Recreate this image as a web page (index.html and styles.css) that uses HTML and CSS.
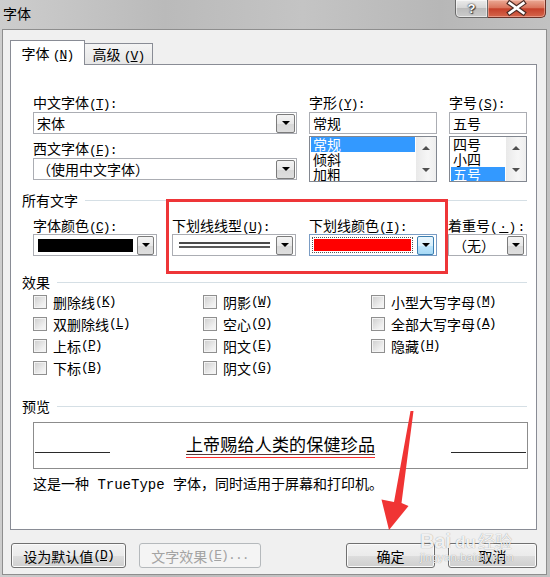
FILE: index.html
```html
<!DOCTYPE html>
<html lang="zh-CN">
<head>
<meta charset="utf-8">
<title>字体</title>
<link rel="stylesheet" href="styles.css">
</head>
<body>
<div class="window">
  <div class="titlebar">
    <span class="title">字体</span>
    <div class="caption">
      <div class="cap-help">?</div>
      <div class="cap-close">
        <svg width="58" height="17" viewBox="0 0 58 17">
          <path d="M22 3 L36 13 M36 3 L22 13" stroke="#4b2b24" stroke-width="5" stroke-linecap="square"/>
          <path d="M22 3 L36 13 M36 3 L22 13" stroke="#ffffff" stroke-width="2.6" stroke-linecap="square"/>
        </svg>
      </div>
    </div>
  </div>

  <div class="client">
    <div class="tabs">
      <div class="tab tab-font">字体 <span class="mn">(<u>N</u>)</span></div>
      <div class="tab tab-adv">高级 <span class="mn">(<u>V</u>)</span></div>
    </div>

    <div class="panel">
      <div class="font-grid">
        <div class="col">
          <div class="lbl">中文字体<span class="mn">(<u>T</u>):</span></div>
          <div class="combo"><span class="combo-text">宋体</span><span class="dd"></span></div>
          <div class="lbl lbl-second">西文字体<span class="mn">(<u>F</u>):</span></div>
          <div class="combo"><span class="combo-text">（使用中文字体）</span><span class="dd"></span></div>
        </div>
        <div class="col">
          <div class="lbl">字形<span class="mn">(<u>Y</u>):</span></div>
          <div class="field">常规</div>
          <div class="listbox">
            <div class="items">
              <div class="item sel">常规</div>
              <div class="item">倾斜</div>
              <div class="item">加粗</div>
            </div>
            <div class="vscroll"><span class="arr-up"></span><span class="arr-down"></span></div>
          </div>
        </div>
        <div class="col">
          <div class="lbl">字号<span class="mn">(<u>S</u>):</span></div>
          <div class="field">五号</div>
          <div class="listbox">
            <div class="items">
              <div class="item">四号</div>
              <div class="item">小四</div>
              <div class="item sel">五号</div>
            </div>
            <div class="vscroll"><span class="arr-up"></span><span class="arr-down"></span></div>
          </div>
        </div>
      </div>

      <div class="group-head head-all">所有文字</div>
      <div class="row2">
        <div class="r2 r2-color">
          <div class="lbl">字体颜色<span class="mn">(<u>C</u>):</span></div>
          <div class="combo combo-sm"><span class="swatch swatch-black"></span><span class="dd dd-sm"></span></div>
        </div>
        <div class="r2 r2-ultype">
          <div class="lbl">下划线线型<span class="mn">(<u>U</u>):</span></div>
          <div class="combo combo-sm"><span class="dbl-line"></span><span class="dd dd-sm"></span></div>
        </div>
        <div class="r2 r2-ulcolor">
          <div class="lbl">下划线颜色<span class="mn">(<u>I</u>):</span></div>
          <div class="combo combo-sm combo-focus"><span class="focus-ring"><span class="swatch swatch-red"></span></span><span class="dd dd-sm dd-hot"></span></div>
        </div>
        <div class="r2 r2-emph">
          <div class="lbl">着重号<span class="mn mn-wide">(<u>·</u>):</span></div>
          <div class="combo combo-sm"><span class="combo-text">（无）</span><span class="dd dd-sm"></span></div>
        </div>
      </div>

      <div class="group-head head-fx">效果</div>
      <div class="effects">
        <div class="chk"><span class="cb"></span>删除线<span class="mn">(<u>K</u>)</span></div>
        <div class="chk"><span class="cb"></span>双删除线<span class="mn">(<u>L</u>)</span></div>
        <div class="chk"><span class="cb"></span>上标<span class="mn">(<u>P</u>)</span></div>
        <div class="chk"><span class="cb"></span>下标<span class="mn">(<u>B</u>)</span></div>
        <div class="chk"><span class="cb"></span>阴影<span class="mn">(<u>W</u>)</span></div>
        <div class="chk"><span class="cb"></span>空心<span class="mn">(<u>O</u>)</span></div>
        <div class="chk"><span class="cb"></span>阳文<span class="mn">(<u>E</u>)</span></div>
        <div class="chk"><span class="cb"></span>阴文<span class="mn">(<u>G</u>)</span></div>
        <div class="chk"><span class="cb"></span>小型大写字母<span class="mn">(<u>M</u>)</span></div>
        <div class="chk"><span class="cb"></span>全部大写字母<span class="mn">(<u>A</u>)</span></div>
        <div class="chk"><span class="cb"></span>隐藏<span class="mn">(<u>H</u>)</span></div>
      </div>

      <div class="group-head head-pv">预览</div>
      <div class="preview">
        <span class="pv-line"></span>
        <span class="pv-text">上帝赐给人类的保健珍品</span>
        <span class="pv-line"></span>
      </div>
      <div class="desc">这是一种<span class="mono"> TrueType </span>字体，同时适用于屏幕和打印机。</div>
    </div>

    <div class="buttons">
      <div class="btn btn-default">设为默认值<span class="mn">(<u>D</u>)</span></div>
      <div class="btn btn-disabled">文字效果<span class="mn">(<u>E</u>)...</span></div>
      <div class="btn btn-ok">确定</div>
      <div class="btn btn-cancel">取消</div>
    </div>
  </div>

  <div class="annot-rect"></div>
  <svg class="annot-arrow" width="550" height="577" viewBox="0 0 550 577">
    <polygon points="410.5,411 413.5,411 401.5,503 408.5,506 389,530 381.5,499.5 394,502" fill="#f03434"/>
  </svg>
  <div class="watermark">
    <div class="wm-top"><span class="wm-bai">Bai</span><span class="wm-du">du</span><span class="wm-jy">经验</span></div>
    <div class="wm-url">jingyan.baidu.com</div>
  </div>
</div>
</body>
</html>
```

FILE: styles.css
```css
* { box-sizing: border-box; }
html, body { margin: 0; padding: 0; }
body {
  width: 550px;
  height: 577px;
  overflow: hidden;
  font-family: "Noto Sans CJK SC", "Liberation Sans", sans-serif;
  font-size: 14px;
  color: #000;
  background: #bdbdbd;
}
u { text-decoration: underline; text-underline-offset: 1px; }

.window {
  position: relative;
  width: 550px;
  height: 577px;
  display: flex;
  flex-direction: column;
  background: linear-gradient(90deg, #cdcdcd 0%, #bababa 30%, #c4c4c4 55%, #b7b7b7 80%, #c2c2c2 100%);
}

/* title bar */
.titlebar {
  height: 29px;
  flex: none;
  display: flex;
  justify-content: space-between;
  align-items: flex-start;
  padding-left: 3px;
  padding-right: 4px;
}
.title { margin-top: 5px; line-height: 16px; font-size: 14px; }
.caption { display: flex; }
.cap-help {
  width: 33px;
  height: 18px;
  border: 1px solid #6a6a6a;
  border-top: none;
  border-radius: 0 0 0 5px;
  background: linear-gradient(#ececec, #d6d6d6 45%, #bcbcbc 50%, #cbcbcb);
  box-shadow: inset 0 0 0 1px rgba(255,255,255,0.55);
  display: flex;
  align-items: center;
  justify-content: center;
  color: #fff;
  font: bold 13px "Liberation Sans", sans-serif;
  text-shadow: 0 0 1px #333, 0 0 2px #333, 1px 1px 1px #444;
}
.cap-close {
  width: 58px;
  height: 18px;
  border: 1px solid #6b3127;
  border-left: none;
  border-top: none;
  border-radius: 0 0 5px 0;
  background: linear-gradient(#eaa995, #da755d 45%, #c5402a 52%, #d4664c);
  box-shadow: inset 0 0 0 1px rgba(255,210,200,0.45);
  display: flex;
  align-items: flex-start;
  justify-content: center;
}

/* client */
.client {
  flex: 1;
  margin: 0 3px 2px 2px;
  border: 1px solid #8e8e8e;
  background: #f0f0f0;
  padding: 10px 9px 0 7px;
}

.tabs {
  display: flex;
  align-items: flex-end;
  height: 24px;
  position: relative;
  z-index: 1;
}
.tab {
  border: 1px solid #898c95;
  border-bottom: none;
  text-align: center;
  white-space: nowrap;
}
.tab-font {
  width: 75px;
  height: 25px;
  margin-bottom: -1px;
  background: #fff;
  line-height: 24px;
}
.tab-adv {
  width: 68px;
  height: 21px;
  border-left: none;
  background: linear-gradient(#f4f4f4, #e6e6e6);
  line-height: 20px;
}

.panel {
  height: 466px;
  background: #fff;
  border: 1px solid #898c95;
  padding: 29px 9px 0 11px;
}

.mn {
  font-family: "Liberation Mono", monospace;
  font-size: 13px;
  letter-spacing: -0.9px;
}
.mn-wide { letter-spacing: 1.4px; }
.mono {
  font-family: "Liberation Mono", monospace;
  font-size: 14px;
  white-space: pre;
}

.lbl { line-height: 16px; height: 16px; white-space: nowrap; }
.lbl-second { margin-top: 6px; }

/* font grid */
.font-grid {
  margin-left: 11px;
  display: grid;
  grid-template-columns: 264px 128px 78px;
  column-gap: 12px;
}
.combo {
  margin-top: 2px;
  height: 22px;
  border: 1px solid #abadb3;
  background: #fff;
  display: flex;
  align-items: center;
  padding: 0 1px 0 3px;
}
.combo-text { flex: 1; line-height: 20px; white-space: nowrap; overflow: hidden; }
.dd {
  width: 19px;
  height: 19px;
  flex: none;
  border: 1px solid #7b7b7b;
  border-radius: 2px;
  background: linear-gradient(#f4f4f4, #e8e8e8 50%, #d8d8d8 52%, #dedede);
  display: flex;
  align-items: center;
  justify-content: center;
}
.dd::before {
  content: "";
  border-left: 4px solid transparent;
  border-right: 4px solid transparent;
  border-top: 4px solid #000;
}
.field {
  margin-top: 2px;
  height: 22px;
  border: 1px solid #abadb3;
  background: #fff;
  padding-left: 3px;
  line-height: 20px;
}
.listbox {
  margin-top: 2px;
  height: 46px;
  border: 1px solid #828790;
  background: #fff;
  display: flex;
}
.items { flex: 1; padding: 0 1px; overflow: hidden; }
.item { height: 15px; line-height: 15px; padding-left: 2px; white-space: nowrap; }
.item.sel { background: #3399ff; color: #fff; }
.vscroll {
  width: 20px;
  flex: none;
  background: linear-gradient(90deg, #e9e9e9, #f6f6f6 60%, #eeeeee);
  display: flex;
  flex-direction: column;
}
.arr-up, .arr-down {
  flex: 1;
  display: flex;
  align-items: center;
  justify-content: center;
}
.arr-up::before {
  content: "";
  border-left: 4px solid transparent;
  border-right: 4px solid transparent;
  border-bottom: 4px solid #4f4f4f;
}
.arr-down::before {
  content: "";
  border-left: 4px solid transparent;
  border-right: 4px solid transparent;
  border-top: 4px solid #4f4f4f;
}

/* group headers */
.group-head {
  display: flex;
  align-items: center;
  line-height: 16px;
  height: 16px;
  white-space: nowrap;
}
.group-head::after {
  content: "";
  flex: 1;
  height: 1px;
  margin-left: 7px;
  background: #d5dfe5;
}
.head-all { margin-top: 10px; }
.head-fx { margin-top: 18px; }
.head-pv { margin-top: 19px; }

/* row 2 */
.row2 {
  margin-left: 11px;
  margin-top: 9px;
  display: flex;
}
.r2-color { width: 124px; }
.r2-ultype { width: 124px; margin-left: 15px; }
.r2-ulcolor { width: 128px; margin-left: 13px; }
.r2-emph { width: 79px; margin-left: 11px; }
.combo-sm { margin-top: 1px; padding: 0 2px 0 4px; }
.dd-sm { width: 17px; height: 19px; margin-left: 4px; }
.swatch { flex: 1; height: 13px; }
.swatch-black { background: #000; }
.swatch-red { display: block; width: 100%; height: 12px; background: #ff0000; }
.focus-ring {
  flex: 1;
  border: 1px dotted #555;
  padding: 1px;
  margin-left: -2px;
}
.combo-focus { border-color: #7a9cc4; }
.dd-hot {
  border-color: #3c7fb1;
  background: linear-gradient(#eaf6fd, #d9f0fc 50%, #bee6fd 52%, #a7d9f5);
}
.dbl-line {
  flex: 1;
  height: 6px;
  margin: 0 2px 0 2px;
  border-top: 2px solid #4a4a4a;
  border-bottom: 2px solid #5a5a5a;
}

/* effects */
.effects {
  margin-left: 11px;
  margin-top: 1px;
  display: grid;
  grid-template-columns: 170px 168px 1fr;
  grid-template-rows: repeat(4, 22px);
  grid-auto-flow: column;
}
.chk {
  display: flex;
  align-items: center;
  line-height: 16px;
  white-space: nowrap;
}
.cb {
  width: 14px;
  height: 14px;
  flex: none;
  margin-right: 6px;
  border: 1px solid #8f8f8f;
  background: linear-gradient(135deg, #cdcdcd, #efefef 70%, #f7f7f7);
  box-shadow: inset 0 0 0 1px #f3f3f3;
}

/* preview */
.preview {
  margin-left: 11px;
  margin-top: 8px;
  width: 495px;
  height: 47px;
  border: 1px solid #8c8c8c;
  display: flex;
  justify-content: space-between;
  align-items: flex-start;
}
.pv-line {
  width: 75px;
  height: 1px;
  margin: 29px 1px 0 1px;
  background: #2a2a2a;
}
.pv-text {
  margin-top: 11px;
  font-size: 17px;
  line-height: 20px;
  letter-spacing: 0.2px;
  padding-bottom: 3px;
  border-bottom: 1px solid #ff2a2a;
  background: linear-gradient(#5a3a3a, #5a3a3a) no-repeat;
  background-size: 100% 1px;
  background-position: 0 calc(100% - 2px);
}
.desc {
  margin-left: 11px;
  margin-top: 6px;
  line-height: 16px;
  white-space: nowrap;
}

/* buttons */
.buttons {
  display: flex;
  margin-top: 13px;
  height: 25px;
}
.btn {
  height: 25px;
  border: 1px solid #707070;
  border-radius: 3px;
  background: linear-gradient(#f2f2f2, #ebebeb 50%, #dddddd 52%, #cfcfcf);
  box-shadow: inset 0 0 0 1px #fbfbfb;
  display: flex;
  align-items: center;
  justify-content: center;
  line-height: 16px;
  white-space: nowrap;
}
.btn-default { width: 115px; margin-left: 1px; }
.btn-disabled {
  width: 122px;
  margin-left: 13px;
  border-color: #b5b9bc;
  background: #f4f4f4;
  box-shadow: none;
  color: #a3a3a3;
}
.btn-ok { width: 89px; margin-left: auto; }
.btn-cancel { width: 89px; margin-left: 13px; }

/* annotations (overlay) */
.annot-rect {
  position: absolute;
  left: 166px;
  top: 199px;
  width: 282px;
  height: 75px;
  border: 3px solid #ee3538;
}
.annot-arrow {
  position: absolute;
  left: 0;
  top: 0;
  pointer-events: none;
}
.watermark {
  position: absolute;
  left: 420px;
  top: 528px;
  color: rgba(255,255,255,0.9);
  text-shadow: 0 0 1px rgba(0,0,0,0.45);
  pointer-events: none;
}
.wm-top { display: flex; align-items: baseline; font-family: "Liberation Sans", sans-serif; }
.wm-bai { font-size: 20px; font-weight: bold; }
.wm-du { font-size: 17px; font-weight: bold; margin-left: 4px; }
.wm-jy { font-family: "Noto Sans CJK SC", sans-serif; font-size: 17px; margin-left: 2px; }
.wm-url { font-family: "Liberation Sans", sans-serif; font-size: 11px; margin-top: -2px; letter-spacing: 0.3px; }
```
